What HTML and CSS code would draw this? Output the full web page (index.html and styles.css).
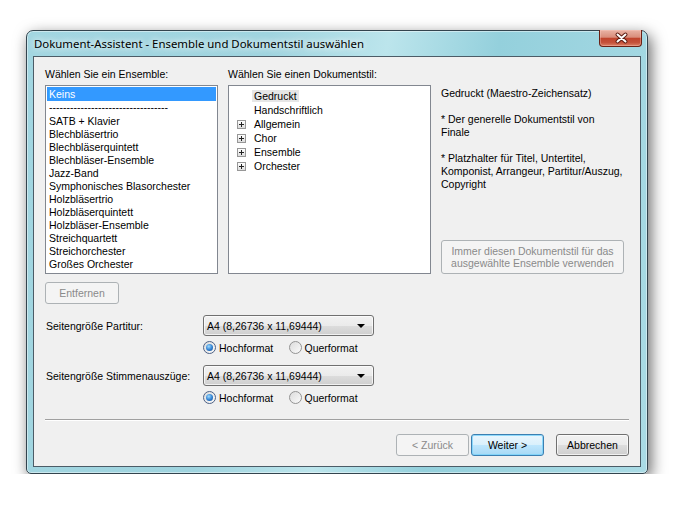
FILE: index.html
```html
<!DOCTYPE html>
<html lang="de">

<head>
  <meta charset="UTF-8" />
  <title>Dokument-Assistent</title>
  <link rel="stylesheet" href="styles.css">
</head>

<body>
  <div class="window">
    <div class="titlebar">
      <span class="title">Dokument-Assistent - Ensemble und Dokumentstil auswählen</span>
      <button class="close-btn" title="Schließen">
        <svg width="43" height="16" viewBox="0 0 43 16">
          <path d="M17.5 4.5 L25.5 11.5 M25.5 4.5 L17.5 11.5" stroke="#5b1b10" stroke-width="4" stroke-linecap="round" fill="none" />
          <path d="M17.5 4.5 L25.5 11.5 M25.5 4.5 L17.5 11.5" stroke="#fff" stroke-width="2" stroke-linecap="round" fill="none" />
        </svg>
      </button>
    </div>
    <div class="client">
      <div class="top-area">
        <div class="col col-ensemble">
          <div class="caption">Wählen Sie ein Ensemble:</div>
          <ul class="listbox">
            <li class="selected">Keins</li>
            <li class="divider">----------------------------------</li>
            <li>SATB + Klavier</li>
            <li>Blechbläsertrio</li>
            <li>Blechbläserquintett</li>
            <li>Blechbläser-Ensemble</li>
            <li>Jazz-Band</li>
            <li>Symphonisches Blasorchester</li>
            <li>Holzbläsertrio</li>
            <li>Holzbläserquintett</li>
            <li>Holzbläser-Ensemble</li>
            <li>Streichquartett</li>
            <li>Streichorchester</li>
            <li>Großes Orchester</li>
          </ul>
        </div>
        <div class="col col-style">
          <div class="caption">Wählen Sie einen Dokumentstil:</div>
          <ul class="treeview">
            <li><span class="expander leaf"></span><span class="node current">Gedruckt</span></li>
            <li><span class="expander leaf"></span><span class="node">Handschriftlich</span></li>
            <li><span class="expander"></span><span class="node">Allgemein</span></li>
            <li><span class="expander"></span><span class="node">Chor</span></li>
            <li><span class="expander"></span><span class="node">Ensemble</span></li>
            <li><span class="expander"></span><span class="node">Orchester</span></li>
          </ul>
        </div>
        <div class="col col-info">
          <p>Gedruckt (Maestro-Zeichensatz)</p>
          <p>* Der generelle Dokumentstil von<br>Finale</p>
          <p>* Platzhalter für Titel, Untertitel,<br>Komponist, Arrangeur, Partitur/Auszug,<br>Copyright</p>
          <button class="btn btn-always" disabled>Immer diesen Dokumentstil für das<br>ausgewählte Ensemble verwenden</button>
        </div>
      </div>

      <button class="btn btn-remove" disabled>Entfernen</button>

      <div class="size-row">
        <span class="size-label">Seitengröße Partitur:</span>
        <div class="combo">
          <span>A4 (8,26736 x 11,69444)</span>
          <span class="combo-arrow"></span>
        </div>
        <span></span>
        <div class="radios">
          <span class="radio-item"><span class="radio checked"></span>Hochformat</span>
          <span class="radio-item"><span class="radio"></span>Querformat</span>
        </div>
      </div>

      <div class="size-row">
        <span class="size-label">Seitengröße Stimmenauszüge:</span>
        <div class="combo">
          <span>A4 (8,26736 x 11,69444)</span>
          <span class="combo-arrow"></span>
        </div>
        <span></span>
        <div class="radios">
          <span class="radio-item"><span class="radio checked"></span>Hochformat</span>
          <span class="radio-item"><span class="radio"></span>Querformat</span>
        </div>
      </div>

      <div class="separator"></div>

      <div class="footer">
        <button class="btn" disabled>&lt; Zurück</button>
        <button class="btn btn-default">Weiter &gt;</button>
        <button class="btn btn-cancel">Abbrechen</button>
      </div>
    </div>
  </div>
</body>

</html>
```

FILE: styles.css
```css
body {
  margin: 0;
  background-color: #ffffff;
  font-family: 'Liberation Sans', Arial, sans-serif;
  font-size: 10.5px;
  color: #000;
}

.window {
  width: 622px;
  height: 444px;
  margin: 30px 0 0 26px;
  box-sizing: border-box;
  border: 1px solid #33444e;
  border-radius: 7px 7px 5px 5px;
  padding: 0 6px 6px 6px;
  display: flex;
  flex-direction: column;
  background: linear-gradient(100deg, #a2d6e1 0%, #9fd4df 35%, #bce5ec 52%, #94d0dc 68%, #aadbe5 100%);
  box-shadow: 3px 5px 15px rgba(0, 0, 0, 0.6), inset 0 0 0 1px rgba(255, 255, 255, 0.45);
}

.titlebar {
  height: 25px;
  display: flex;
  align-items: center;
  padding-left: 1px;
}

.title {
  font-family: 'Noto Sans', 'Open Sans', sans-serif;
  font-size: 11.4px;
  text-shadow: 0 0 6px #fff, 0 0 10px rgba(255, 255, 255, 0.8);
}

.close-btn {
  align-self: flex-start;
  margin: -1px -1px 0 auto;
  width: 43px;
  height: 17px;
  padding: 0;
  border: 1px solid #6a2115;
  border-top: none;
  border-radius: 0 0 4px 4px;
  background: linear-gradient(#e9b3a5 0%, #d98d7b 45%, #c0442d 52%, #c4513a 78%, #dc8064 100%);
  box-shadow: inset 0 0 0 1px rgba(255, 210, 200, 0.35);
}

.close-btn svg {
  display: block;
}

.client {
  flex: 1;
  border: 1px solid #4c5c67;
  background-color: #f0f0f0;
  padding: 11px 11px 0 11px;
  display: flex;
  flex-direction: column;
}

.top-area {
  display: flex;
  gap: 10px;
  height: 206px;
}

.col {
  display: flex;
  flex-direction: column;
}

.col-ensemble {
  width: 173px;
}

.col-style {
  width: 203px;
}

.col-info {
  width: 183px;
  padding-top: 19px;
  line-height: 13px;
}

.caption {
  line-height: 13px;
  margin-bottom: 4px;
  white-space: nowrap;
}

.listbox,
.treeview {
  list-style: none;
  margin: 0;
  height: 189px;
  box-sizing: border-box;
  border: 1px solid #828790;
  background-color: #fff;
  overflow: hidden;
}

.listbox {
  padding: 1px;
}

.listbox li {
  line-height: 13px;
  padding-left: 2px;
  white-space: nowrap;
  overflow: hidden;
}

.listbox li.selected {
  line-height: 14px;
  background-color: #3399ff;
  color: #fff;
}

.listbox li.divider {
  line-height: 13px;
  margin-bottom: 1px;
}

.treeview {
  padding: 3px 0 0 8px;
}

.treeview li {
  height: 14px;
  display: flex;
  align-items: center;
}

.expander {
  width: 9px;
  height: 9px;
  box-sizing: border-box;
  margin-right: 6px;
  border: 1px solid #979797;
  background: linear-gradient(#ffffff, #dcdcdc) no-repeat;
  position: relative;
}

.expander::before,
.expander::after {
  content: '';
  position: absolute;
  background-color: #222;
}

.expander::before {
  left: 1px;
  top: 3px;
  width: 5px;
  height: 1px;
}

.expander::after {
  left: 3px;
  top: 1px;
  width: 1px;
  height: 5px;
}

.expander.leaf {
  visibility: hidden;
}

.node {
  line-height: 12px;
  padding: 0 2px;
}

.node.current {
  background-color: #e6e6e6;
}

.col-info p {
  margin: 0 0 13px 0;
  white-space: nowrap;
}

.btn {
  font: inherit;
  color: #000;
  padding: 0;
  width: 73px;
  height: 22px;
  border: 1px solid #707070;
  border-radius: 3px;
  background: linear-gradient(#f2f2f2 0%, #ebebeb 50%, #dddddd 51%, #cfcfcf 100%);
  box-shadow: inset 0 0 0 1px rgba(255, 255, 255, 0.7);
}

.btn:disabled {
  color: #8a8a8a;
  border-color: #adb2b5;
  background: #f4f4f4;
  box-shadow: none;
}

.btn-always {
  margin-top: auto;
  width: 183px;
  height: 34px;
  line-height: 12px;
}

.btn-remove {
  align-self: flex-start;
  width: 74px;
  margin-top: 8px;
}

.size-row {
  display: grid;
  grid-template-columns: 158px 171px;
  row-gap: 5px;
  align-items: center;
  margin-top: 11px;
}

.size-label {
  padding-left: 1px;
  white-space: nowrap;
}

.combo {
  height: 21px;
  box-sizing: border-box;
  border: 1px solid #707070;
  border-radius: 3px;
  background: linear-gradient(#f2f2f2 0%, #ebebeb 50%, #dddddd 51%, #cfcfcf 100%);
  box-shadow: inset 0 0 0 1px rgba(255, 255, 255, 0.7);
  display: flex;
  align-items: center;
  padding-left: 3px;
}

.combo-arrow {
  margin-left: auto;
  margin-right: 8px;
  width: 0;
  height: 0;
  border-left: 4px solid transparent;
  border-right: 4px solid transparent;
  border-top: 4px solid #000;
}

.radios {
  display: flex;
  height: 13px;
  align-items: center;
}

.radio-item {
  display: flex;
  align-items: center;
  width: 87px;
  white-space: nowrap;
}

.radio {
  width: 13px;
  height: 13px;
  box-sizing: border-box;
  margin-right: 3px;
  border-radius: 50%;
  border: 1px solid #939393;
  background: linear-gradient(135deg, #dcdcdc, #fbfbfb);
  display: flex;
  align-items: center;
  justify-content: center;
}

.radio.checked {
  border-color: #4d6185;
}

.radio.checked::after {
  content: '';
  width: 7px;
  height: 7px;
  border-radius: 50%;
  background: radial-gradient(circle at 40% 35%, #9fdcff 0%, #2f7fd1 55%, #174a8c 100%);
}

.separator {
  margin-top: 15px;
  border-top: 1px solid #a0a0a0;
  border-bottom: 1px solid #ffffff;
}

.footer {
  margin-top: 13px;
  display: flex;
  justify-content: flex-end;
  gap: 2px;
}

.btn-default {
  border-color: #3c7fb1;
  background: linear-gradient(#eaf6fd 0%, #d9f0fc 50%, #bee6fd 51%, #a7d9f5 100%);
  box-shadow: inset 0 0 0 1px rgba(120, 210, 250, 0.8);
}

.btn-cancel {
  margin-left: 10px;
}
```
